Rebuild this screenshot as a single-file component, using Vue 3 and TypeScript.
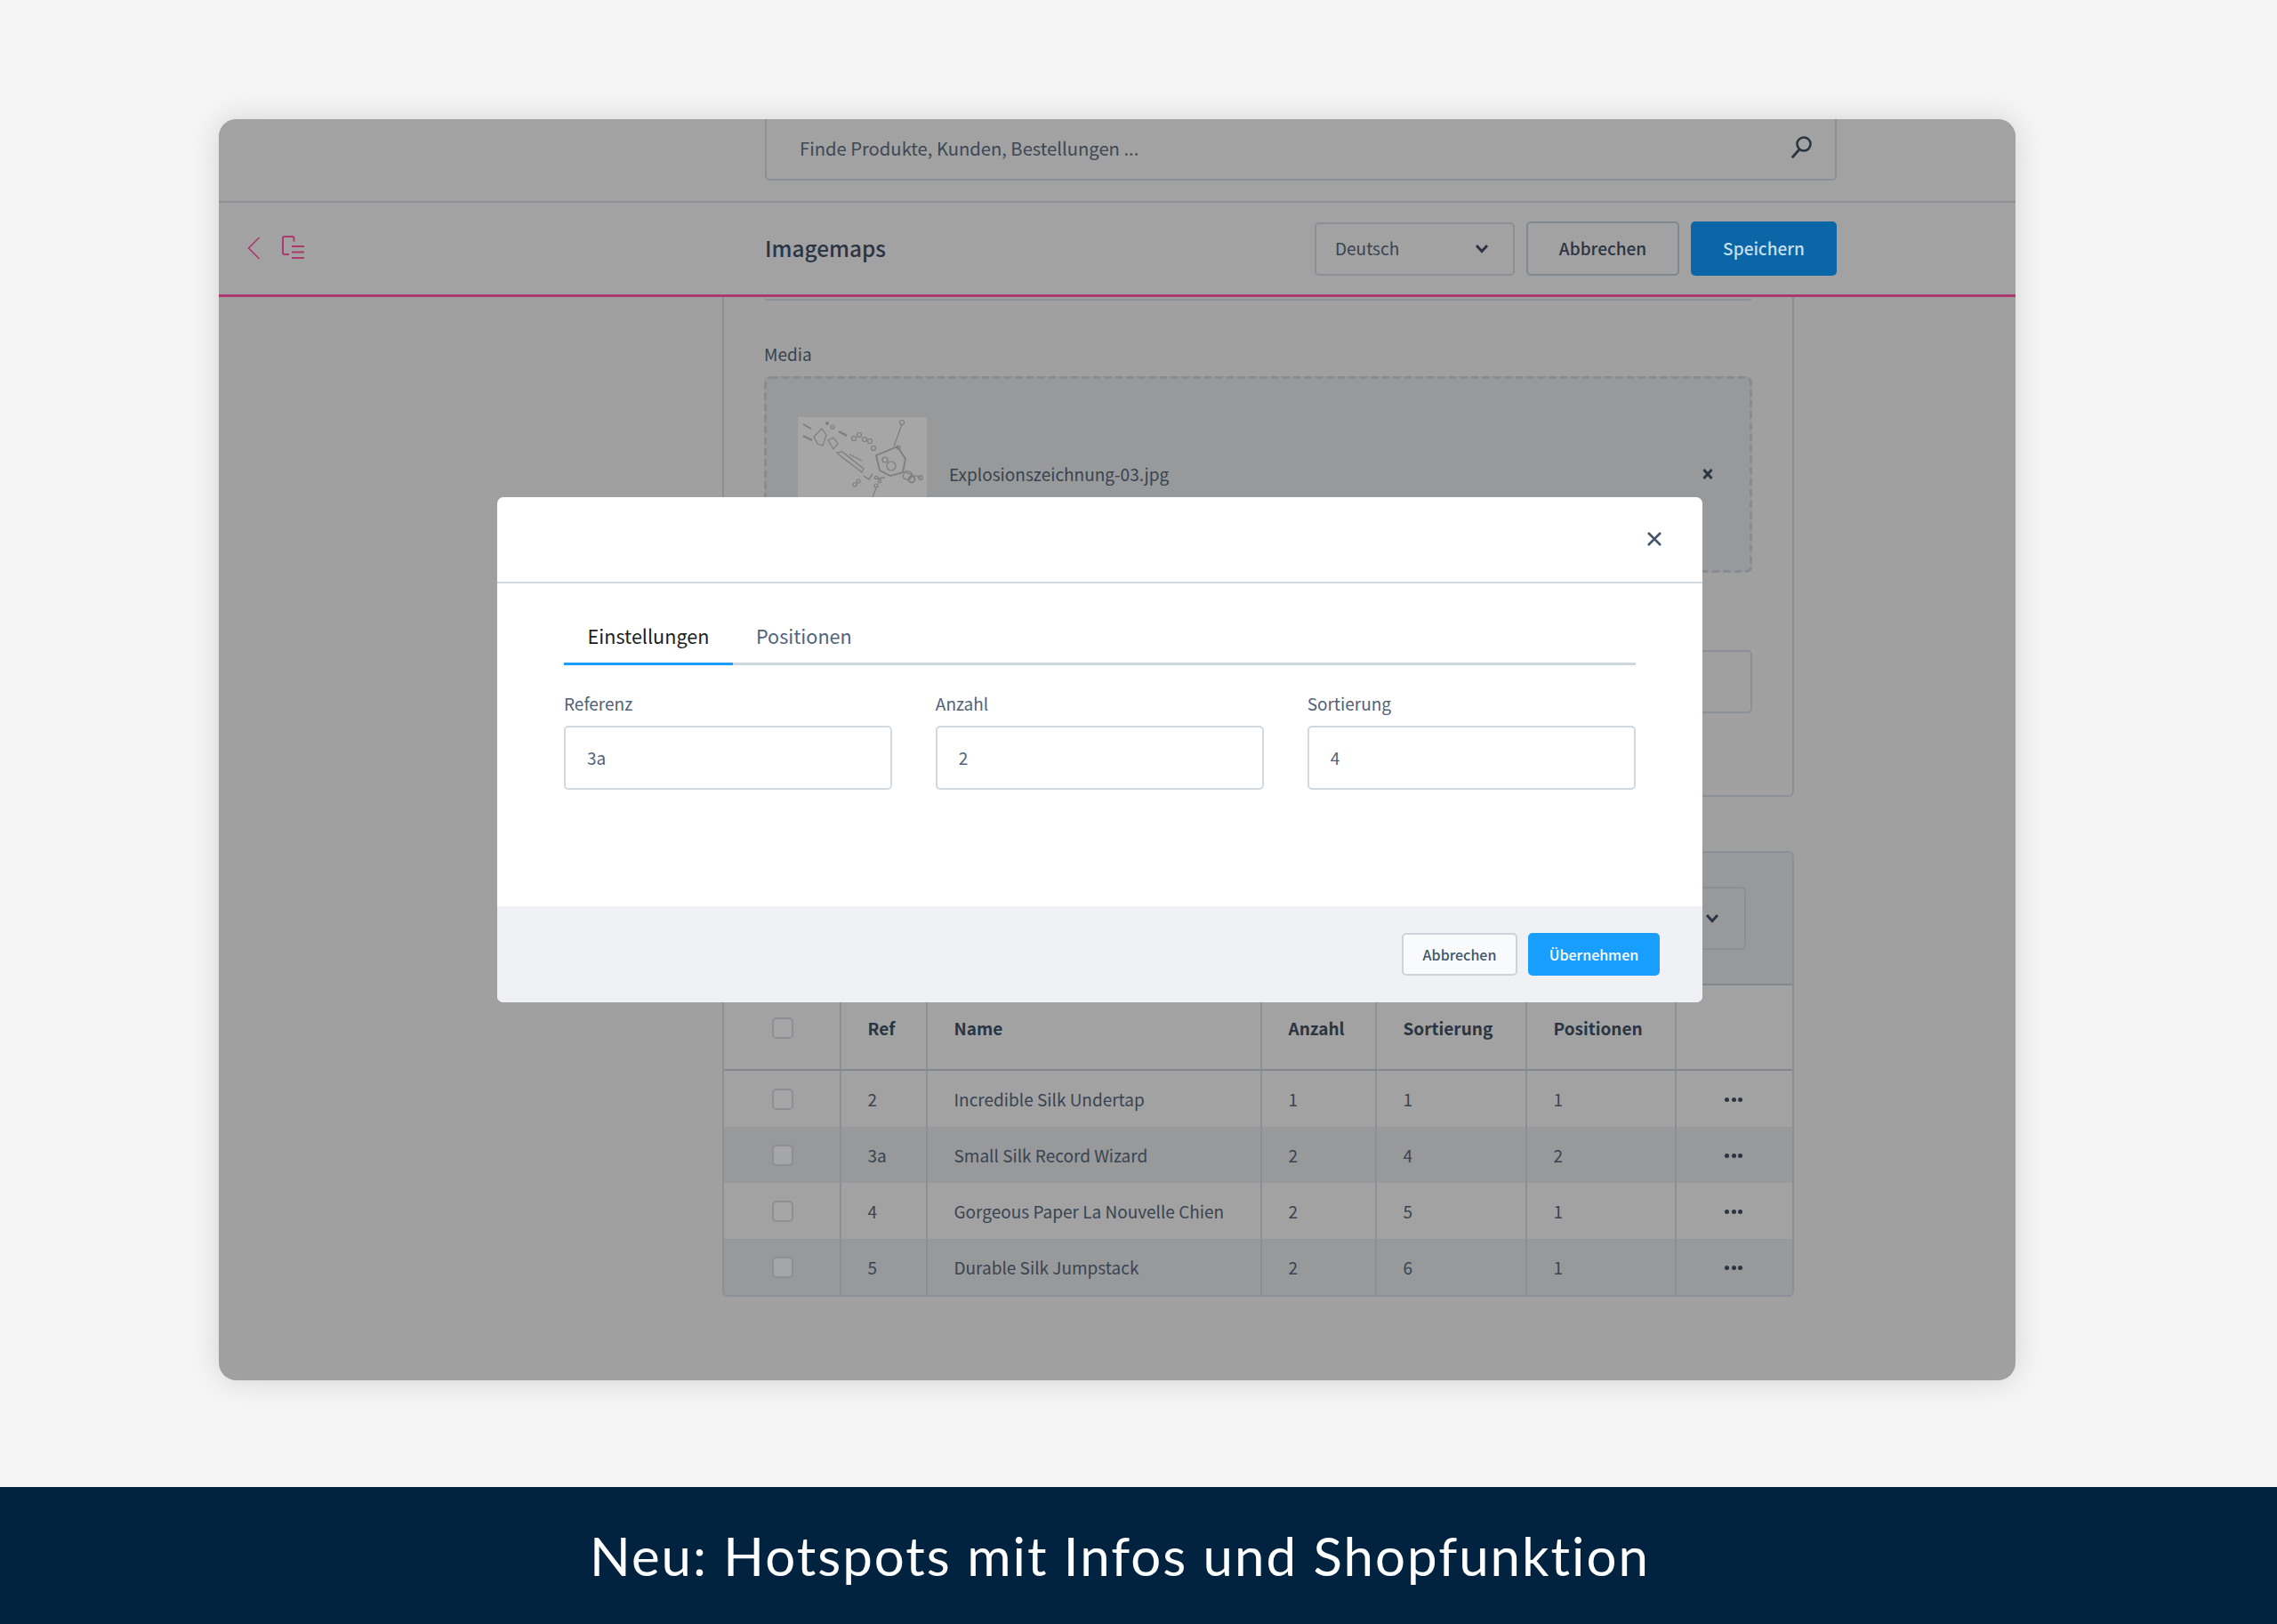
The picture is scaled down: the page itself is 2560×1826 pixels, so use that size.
<script setup lang="ts">
interface Row {
  ref: string
  name: string
  count: number
  sort: number
  pos: number
  height: number
}

const rows: Row[] = [
  { ref: '2', name: 'Incredible Silk Undertap', count: 1, sort: 1, pos: 1, height: 64 },
  { ref: '3a', name: 'Small Silk Record Wizard', count: 2, sort: 4, pos: 2, height: 63 },
  { ref: '4', name: 'Gorgeous Paper La Nouvelle Chien', count: 2, sort: 5, pos: 1, height: 63 },
  { ref: '5', name: 'Durable Silk Jumpstack', count: 2, sort: 6, pos: 1, height: 64 },
]

const fields = [
  { label: 'Referenz', value: '3a' },
  { label: 'Anzahl', value: '2' },
  { label: 'Sortierung', value: '4' },
]
</script>

<template>
  <div class="page">
    <main class="stage">
      <div class="frame">
        <div class="topbar">
          <div class="search">
            <span>Finde Produkte, Kunden, Bestellungen ...</span>
            <svg class="search-icon" width="26" height="26" viewBox="0 0 26 26" fill="none">
              <circle cx="15" cy="10" r="7.5" stroke="#2b3542" stroke-width="2.6" />
              <path d="M10 16 L2.5 24.5" stroke="#2b3542" stroke-width="2.8" stroke-linecap="round" />
            </svg>
          </div>
        </div>

        <header class="smartbar">
          <div class="smartbar-icons">
            <svg width="15" height="26" viewBox="0 0 15 26" fill="none">
              <path d="M13.5 1 L1.5 13 L13.5 25" stroke="#ab3a70" stroke-width="1.7" />
            </svg>
            <svg width="26" height="27" viewBox="0 0 26 27" fill="none">
              <path d="M13.5 6.5 V3 a2 2 0 0 0 -2 -2 H3 a2 2 0 0 0 -2 2 V19 a2 2 0 0 0 2 2 H8" stroke="#ab3a70" stroke-width="2" />
              <path d="M11 12 H25 M11 18.500 H25 M11 25 H25" stroke="#ab3a70" stroke-width="2" />
            </svg>
          </div>
          <h1 class="smartbar-title">Imagemaps</h1>
          <div class="smartbar-actions">
            <div class="lang-select">
              <span>Deutsch</span>
              <svg width="16" height="11" viewBox="0 0 16 11" fill="none">
                <path d="M2 2 L8 8.500 L14 2" stroke="#2b3542" stroke-width="3" />
              </svg>
            </div>
            <button class="bar-btn">Abbrechen</button>
            <button class="bar-btn bar-btn-primary">Speichern</button>
          </div>
        </header>

        <div class="content">
          <section class="card card-media">
            <div class="field-edge"></div>
            <div class="media-label">Media</div>
            <div class="dropzone">
              <svg class="dropzone-edge" width="1111" height="221" fill="none">
                <rect x="1.500" y="1.500" width="1108" height="218" rx="6" stroke="#868c92" stroke-width="3" stroke-dasharray="8 4.500" />
              </svg>
              <div class="thumb">
                <svg width="145" height="145" viewBox="0 0 145 145" fill="none" stroke="#7c7e80" stroke-width="1.200">
                  <path d="M6 8 L15 13 M6 21 L16 26" stroke-width="2" />
                  <path d="M18 22 L27 13 L32 20 L28 32 L22 30 Z" />
                  <path d="M34 26 L40 23 L45 30 L40 36 Z" />
                  <circle cx="33" cy="7" r="1.300" fill="#7c7e80" />
                  <circle cx="39" cy="11" r="2" />
                  <path d="M46 16 L55 21" stroke-width="2.500" />
                  <circle cx="63" cy="24" r="2.500" />
                  <circle cx="69" cy="20" r="2.500" />
                  <circle cx="75" cy="25" r="2.500" />
                  <circle cx="81" cy="27" r="2.500" />
                  <circle cx="85" cy="35" r="2.500" />
                  <path d="M44 40 L47 43 L72 62 L74 58 L50 39 Z" />
                  <path d="M58 42 L72 49" />
                  <path d="M88 43 L112 33 L121 47 L118 62 L104 66 L92 60 Z" stroke-width="1.800" />
                  <circle cx="105" cy="55" r="5" />
                  <circle cx="98" cy="48" r="3" />
                  <path d="M108 33 L117 8" />
                  <circle cx="117" cy="6" r="2.500" />
                  <circle cx="113" cy="34" r="2" />
                  <path d="M120 62 L138 68" />
                  <rect x="119" y="61" width="9" height="9" rx="3" transform="rotate(20 123 65)" />
                  <circle cx="128" cy="70" r="3.500" stroke-width="1.800" />
                  <circle cx="138" cy="68" r="2.300" />
                  <circle cx="64" cy="76" r="2" />
                  <circle cx="68" cy="72" r="2" />
                  <path d="M74 66 L80 70 L84 64" stroke-width="1.400" />
                  <circle cx="88" cy="68" r="1.700" />
                  <path d="M90 69 L98 68" stroke-width="1.600" />
                  <circle cx="88" cy="77" r="2" />
                  <circle cx="92" cy="72" r="1.700" />
                  <path d="M84 90 L88 80" />
                </svg>
              </div>
              <span class="file-name">Explosionszeichnung-03.jpg</span>
              <svg class="file-remove" width="14" height="14" viewBox="0 0 14 14" fill="none">
                <path d="M2.500 2 L11.500 12 M11.500 2 L2.500 12" stroke="#2b3542" stroke-width="2.800" />
              </svg>
            </div>
            <div class="hidden-input"></div>
          </section>

          <section class="card card-table">
            <div class="table-tools">
              <div class="tools-select">
                <svg width="16" height="11" viewBox="0 0 16 11" fill="none">
                  <path d="M2 2 L8 8.500 L14 2" stroke="#2b3542" stroke-width="3" />
                </svg>
              </div>
            </div>
            <table class="positions">
              <colgroup>
                <col style="width: 131px" />
                <col style="width: 97px" />
                <col style="width: 376px" />
                <col style="width: 129px" />
                <col style="width: 169px" />
                <col style="width: 168px" />
                <col />
              </colgroup>
              <thead>
                <tr>
                  <th class="cell-check"><span class="checkbox"></span></th>
                  <th>Ref</th>
                  <th>Name</th>
                  <th>Anzahl</th>
                  <th>Sortierung</th>
                  <th>Positionen</th>
                  <th></th>
                </tr>
              </thead>
              <tbody>
                <tr v-for="row in rows" :key="row.ref" :style="{ height: row.height + 'px' }">
                  <td class="cell-check"><span class="checkbox"></span></td>
                  <td>{{ row.ref }}</td>
                  <td>{{ row.name }}</td>
                  <td>{{ row.count }}</td>
                  <td>{{ row.sort }}</td>
                  <td>{{ row.pos }}</td>
                  <td class="cell-more">
                    <span class="dots"><i></i><i></i><i></i></span>
                  </td>
                </tr>
              </tbody>
            </table>
          </section>
        </div>

        <div class="modal">
          <div class="modal-head">
            <svg width="18" height="18" viewBox="0 0 18 18" fill="none">
              <path d="M2 2 L16 16 M16 2 L2 16" stroke="#44566c" stroke-width="2.600" />
            </svg>
          </div>
          <div class="modal-body">
            <div class="tabs">
              <div class="tab tab-active">Einstellungen</div>
              <div class="tab">Positionen</div>
            </div>
            <div class="form-grid">
              <div v-for="field in fields" :key="field.label" class="form-field">
                <label>{{ field.label }}</label>
                <div class="form-input">{{ field.value }}</div>
              </div>
            </div>
          </div>
          <div class="modal-foot">
            <button class="modal-btn">Abbrechen</button>
            <button class="modal-btn modal-btn-primary">Übernehmen</button>
          </div>
        </div>
      </div>
    </main>

    <footer class="banner">Neu: Hotspots mit Infos und Shopfunktion</footer>
  </div>
</template>

<style>
html,
body {
  margin: 0;
  background: #f5f5f5;
}
</style>

<style scoped>
.page {
  width: 2560px;
  height: 1826px;
  display: flex;
  flex-direction: column;
  font-family: "Noto Sans CJK SC", "Noto Sans", sans-serif;
  color: #2b3542;
  background: #f5f5f5;
  overflow: hidden;
}

.stage {
  flex: 1;
  padding: 134px 294px 0 246px;
}

.frame {
  position: relative;
  height: 1418px;
  border-radius: 20px;
  background: #a0a0a1;
  box-shadow: 0 0 34px rgba(0, 0, 0, 0.14);
  overflow: hidden;
}

.topbar {
  height: 92px;
  padding-left: 614px;
  border-bottom: 2px solid #8a9095;
  background: #a2a2a3;
}

.search {
  width: 1205px;
  height: 69px;
  box-sizing: border-box;
  display: flex;
  align-items: center;
  justify-content: space-between;
  padding: 0 24px 2px 37px;
  border: 2px solid #8a9095;
  border-top: 0;
  border-radius: 0 0 5px 5px;
  font-size: 20.200px;
  line-height: 30px;
  color: #3e4853;
}

.search-icon {
  margin-bottom: 4px;
}

.smartbar {
  height: 103px;
  display: flex;
  align-items: center;
  background: #a2a2a3;
  border-bottom: 3px solid #ab3a70;
}

.smartbar-icons {
  width: 582px;
  padding-left: 32px;
  display: flex;
  align-items: center;
  gap: 24px;
  margin-top: -2px;
}

.smartbar-title {
  margin: 0 0 2px;
  font-size: 24.400px;
  font-weight: 500;
  line-height: 34px;
  color: #2b3542;
}

.smartbar-actions {
  margin-left: auto;
  margin-right: 201px;
  display: flex;
  gap: 13px;
  align-items: center;
}

.lang-select {
  width: 225px;
  height: 60px;
  box-sizing: border-box;
  display: flex;
  align-items: center;
  justify-content: space-between;
  padding: 0 27px 2px 21px;
  border: 2px solid #8a9095;
  border-radius: 5px;
  font-size: 19px;
  color: #3a4450;
}

.lang-select svg {
  margin-top: 2px;
}

.bar-btn {
  height: 61px;
  width: 172px;
  border: 2px solid #7f878f;
  border-radius: 5px;
  background: transparent;
  font-family: inherit;
  font-size: 19px;
  font-weight: 500;
  color: #2b3542;
  padding: 0 0 2px;
}

.bar-btn-primary {
  width: 164px;
  border: 0;
  background: #0b66a8;
  color: #c7dff0;
}

.content {
  margin-left: 566px;
  width: 1205px;
  display: flex;
  flex-direction: column;
  gap: 61px;
}

.card {
  box-sizing: border-box;
  border: 2px solid #8a9095;
  border-radius: 0 0 6px 6px;
}

.card-media {
  height: 562px;
  border-top: 0;
  padding: 0 45px;
  display: flex;
  flex-direction: column;
}

.field-edge {
  height: 2px;
  border-bottom: 2px solid #8a9095;
  border-radius: 0 0 4px 4px;
}

.media-label {
  margin-top: 45px;
  font-size: 19px;
  line-height: 30px;
  color: #39434e;
}

.dropzone {
  position: relative;
  margin-top: 10px;
  height: 221px;
  box-sizing: border-box;
  padding: 46px 0 0 38px;
  display: flex;
  align-items: flex-start;
  border-radius: 6px;
  background: #98999b;
}

.dropzone-edge {
  position: absolute;
  left: 0;
  top: 0;
}

.thumb {
  width: 145px;
  height: 145px;
  background: #a6a6a6;
  flex: none;
}

.thumb svg {
  filter: blur(0.4px);
}

.file-name {
  margin: 49px 0 0 25px;
  font-size: 19px;
  line-height: 30px;
  color: #39434e;
}

.file-remove {
  position: absolute;
  top: 103px;
  right: 43px;
}

.hidden-input {
  margin-top: 87px;
  height: 71px;
  box-sizing: border-box;
  border: 2px solid #8a9095;
  border-radius: 5px;
}

.card-table {
  border-radius: 6px;
  height: 501px;
  overflow: hidden;
}

.table-tools {
  height: 149px;
  box-sizing: border-box;
  padding: 38px 52px 0 188px;
  background: #98999b;
  border-bottom: 2px solid #82888e;
}

.tools-select {
  height: 71px;
  box-sizing: border-box;
  display: flex;
  align-items: center;
  justify-content: flex-end;
  padding-right: 28px;
  border: 2px solid #8a9095;
  border-radius: 5px;
}

.positions {
  width: 100%;
  table-layout: fixed;
  border-collapse: collapse;
  font-size: 19px;
  line-height: 30px;
  color: #3a4450;
}

.positions th,
.positions td {
  padding: 0 0 0 29.500px;
  text-align: left;
  white-space: nowrap;
  border-right: 2px solid #8a9095;
}

.positions th:last-child,
.positions td:last-child {
  border-right: 0;
}

.positions th {
  height: 95px;
  box-sizing: border-box;
  vertical-align: top;
  padding-top: 33px;
  font-weight: 700;
  color: #2b3542;
  background: #a2a2a3;
  border-bottom: 2px solid #82888e;
}

.positions tbody tr:nth-child(odd) td {
  background: #a2a2a3;
}

.positions tbody tr:nth-child(even) td {
  background: #98999b;
}

.positions .cell-check {
  padding-left: 54px;
}

.positions th.cell-check {
  padding-top: 36px;
}

.checkbox {
  display: block;
  width: 24px;
  height: 24px;
  box-sizing: border-box;
  border: 2px solid #8a9095;
  border-radius: 5px;
  background: #a6a6a6;
}

.positions .cell-more {
  padding: 0 2px 0 0;
  text-align: center;
}

.dots {
  display: inline-flex;
  gap: 2.500px;
  vertical-align: 5px;
}

.dots i {
  width: 5px;
  height: 5px;
  border-radius: 50%;
  background: #2b3542;
}

.modal {
  position: absolute;
  left: 313px;
  top: 425px;
  width: 1355px;
  height: 568px;
  display: flex;
  flex-direction: column;
  border-radius: 7px;
  background: #fff;
  overflow: hidden;
}

.modal-head {
  height: 97px;
  flex: none;
  display: flex;
  justify-content: flex-end;
  padding: 38px 45px 0 0;
  box-sizing: border-box;
  border-bottom: 2px solid #d1d9e0;
}

.modal-body {
  flex: 1;
  padding: 0 75px;
}

.tabs {
  height: 92px;
  box-sizing: border-box;
  display: flex;
  border-bottom: 3px solid #ccd8de;
}

.tab {
  height: 92px;
  flex: none;
  box-sizing: border-box;
  padding: 0 26px 17px;
  display: flex;
  align-items: flex-end;
  font-size: 21.600px;
  line-height: 32px;
  color: #51637a;
}

.tab-active {
  width: 190px;
  justify-content: center;
  padding: 0 0 14px;
  color: #1a1f24;
  border-bottom: 3px solid #189eff;
}

.form-grid {
  margin-top: 28px;
  display: grid;
  grid-template-columns: repeat(3, 1fr);
  gap: 48.500px;
}

.form-field label {
  display: block;
  font-size: 19px;
  line-height: 30px;
  color: #51637a;
  margin-bottom: 10px;
}

.form-input {
  height: 72px;
  box-sizing: border-box;
  padding: 0 0 1px 24px;
  display: flex;
  align-items: center;
  border: 2px solid #d1d9e0;
  border-radius: 5px;
  font-size: 19px;
  color: #51637a;
}

.modal-foot {
  height: 108px;
  flex: none;
  box-sizing: border-box;
  display: flex;
  justify-content: flex-end;
  align-items: flex-start;
  gap: 12px;
  padding: 30px 48px 0 0;
  background: #eff1f4;
}

.modal-btn {
  height: 48px;
  width: 130px;
  padding: 0 0 1px;
  border: 2px solid #ccd3da;
  border-radius: 5px;
  background: #f9fafb;
  font-family: inherit;
  font-size: 16px;
  font-weight: 500;
  color: #44566c;
}

.modal-btn-primary {
  width: 148px;
  border: 0;
  background: #189eff;
  color: #fff;
}

.banner {
  height: 154px;
  flex: none;
  display: flex;
  align-items: center;
  justify-content: center;
  padding-right: 42px;
  background: #02233f;
  color: #fff;
  font-family: Lato, "Noto Sans", sans-serif;
  font-size: 60px;
  letter-spacing: 2px;
}
</style>
